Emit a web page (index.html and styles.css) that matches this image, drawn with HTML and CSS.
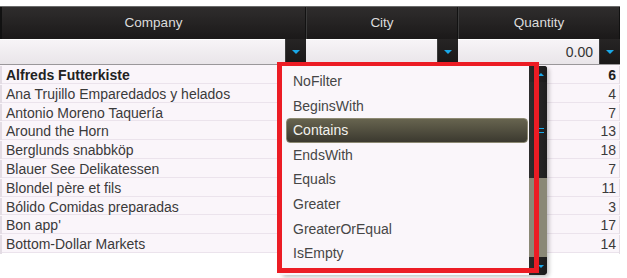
FILE: index.html
```html
<!DOCTYPE html>
<html>
<head>
<meta charset="utf-8">
<link rel="stylesheet" href="styles.css">
</head>
<body>
<div class="page">
  <div class="grid">
    <div class="hrow">
      <div class="hcell">Company</div>
      <div class="hcell">City</div>
      <div class="hcell">Quantity</div>
    </div>
    <div class="frow">
      <div class="fcell"><div class="finput"></div><div class="fbtn"><span class="tri"></span></div></div>
      <div class="fcell"><div class="finput"></div><div class="fbtn"><span class="tri"></span></div></div>
      <div class="fcell"><div class="finput num">0.00</div><div class="fbtn"><span class="tri"></span></div></div>
    </div>
    <div class="rows">
      <div class="row bold"><div class="c1">Alfreds Futterkiste</div><div class="c2"></div><div class="c3">6</div></div>
      <div class="row"><div class="c1">Ana Trujillo Emparedados y helados</div><div class="c2"></div><div class="c3">4</div></div>
      <div class="row"><div class="c1">Antonio Moreno Taquería</div><div class="c2"></div><div class="c3">7</div></div>
      <div class="row"><div class="c1">Around the Horn</div><div class="c2"></div><div class="c3">13</div></div>
      <div class="row"><div class="c1">Berglunds snabbköp</div><div class="c2"></div><div class="c3">18</div></div>
      <div class="row"><div class="c1">Blauer See Delikatessen</div><div class="c2"></div><div class="c3">7</div></div>
      <div class="row"><div class="c1">Blondel père et fils</div><div class="c2"></div><div class="c3">11</div></div>
      <div class="row"><div class="c1">Bólido Comidas preparadas</div><div class="c2"></div><div class="c3">3</div></div>
      <div class="row"><div class="c1">Bon app'</div><div class="c2"></div><div class="c3">17</div></div>
      <div class="row"><div class="c1">Bottom-Dollar Markets</div><div class="c2"></div><div class="c3">14</div></div>
    </div>
  </div>

  <div class="popup">
    <div class="list">
      <div class="item">NoFilter</div>
      <div class="item">BeginsWith</div>
      <div class="item sel">Contains</div>
      <div class="item">EndsWith</div>
      <div class="item">Equals</div>
      <div class="item">Greater</div>
      <div class="item">GreaterOrEqual</div>
      <div class="item">IsEmpty</div>
    </div>
    <div class="sbar">
      <div class="sbtn up"><span class="atri up"></span></div>
      <div class="strack">
        <div class="sthumb"><span class="grip"></span></div>
        <div class="srest"></div>
      </div>
      <div class="sbtn down"><span class="atri down"></span></div>
    </div>
  </div>
  <div class="mark"></div>
</div>
</body>
</html>
```
FILE: styles.css
```css
html, body {
  margin: 0;
  padding: 0;
  background: #ffffff;
}
.page {
  position: relative;
  width: 627px;
  height: 278px;
  padding-top: 6px;
  box-sizing: border-box;
  font-family: "Liberation Sans", Arial, sans-serif;
  font-size: 14px;
  overflow: hidden;
}
.grid {
  width: 620px;
}
.hrow {
  display: grid;
  grid-template-columns: 306px 152px 162px;
  height: 33px;
  background: linear-gradient(#2f2d2d, #1b1919);
  border-top: 1px solid #6a6a6a;
  box-sizing: border-box;
  font-size: 13.5px;
}
.hcell {
  display: flex;
  align-items: center;
  justify-content: center;
  color: #dcdcdc;
  border-left: 1px solid #3c3c3c;
  border-right: 1px solid #121212;
  padding-bottom: 1px;
}
.hcell:first-child {
  border-left: 2px solid #111;
}
.hcell:last-child {
  border-right: 1px solid #111;
}
.frow {
  display: grid;
  grid-template-columns: 306px 152px 162px;
  height: 26px;
  border-bottom: 1px solid #9a979a;
  box-sizing: border-box;
}
.fcell {
  display: flex;
}
.finput {
  flex: 1;
  background: linear-gradient(#f7f4f7, #e9e5e9);
  border-top: 1px solid #fff;
  display: flex;
  align-items: center;
  justify-content: flex-end;
  padding-right: 6px;
  color: #333;
}
.fbtn {
  width: 21px;
  background: linear-gradient(#262424, #1a1818);
  border-left: 1px solid #3a3a3a;
  box-sizing: border-box;
  display: flex;
  align-items: center;
  justify-content: center;
}
.tri {
  width: 0;
  height: 0;
  border-left: 4px solid transparent;
  border-right: 4px solid transparent;
  border-top: 4px solid #19a8e8;
  margin-top: 1px;
}
.rows {
  display: flex;
  flex-direction: column;
}
.row {
  display: grid;
  grid-template-columns: 306px 152px 162px;
  height: 18.8px;
  background: #faf5fa;
  border-bottom: 1px solid #ebe3ec;
  box-sizing: border-box;
  color: #3a3a3a;
  line-height: 19px;
  padding-top: 1px;
}
.row.bold {
  font-weight: bold;
  color: #222;
}
.c1 {
  padding-left: 4px;
  border-left: 2px solid #e3dce4;
  border-right: 1px solid #ebe3ec;
  white-space: nowrap;
}
.c2 {
  border-right: 1px solid #ebe3ec;
}
.c3 {
  text-align: right;
  padding-right: 3px;
  border-right: 1px solid #e3dce4;
}
.popup {
  position: absolute;
  left: 281px;
  top: 66px;
  width: 266px;
  height: 209px;
  display: flex;
  background: #faf6fa;
  border-radius: 0 3px 4px 0;
  box-shadow: 2px 2px 4px rgba(0, 0, 0, 0.25);
}
.list {
  flex: 1;
  padding: 3px 1px 0 5px;
  display: flex;
  flex-direction: column;
}
.item {
  height: 24.6px;
  line-height: 24px;
  padding-left: 7px;
  color: #464646;
  box-sizing: border-box;
}
.item.sel {
  background: linear-gradient(#67644f, #3b392f);
  border: 1px solid #8c8972;
  border-radius: 4px;
  color: #f2f2ee;
  padding-left: 6px;
  line-height: 22px;
}
.sbar {
  width: 18px;
  display: flex;
  flex-direction: column;
  background: #1e1e1e;
  border-radius: 0 3px 4px 0;
  overflow: hidden;
}
.sbtn {
  height: 16px;
  background: linear-gradient(90deg, #2a2a2a, #1a1a1a);
  display: flex;
  align-items: center;
  justify-content: center;
}
.sbtn.down {
  height: 18px;
}
.atri {
  width: 0;
  height: 0;
  border-left: 3px solid transparent;
  border-right: 3px solid transparent;
  margin-left: 6px;
}
.atri.up {
  border-bottom: 3px solid #19a8e8;
}
.atri.down {
  border-top: 3px solid #19a8e8;
}
.strack {
  flex: 1;
  display: flex;
  flex-direction: column;
  background: #8a8876;
}
.sthumb {
  height: 96px;
  background: linear-gradient(90deg, #2e2e2e, #1e1e1e);
  display: flex;
  align-items: center;
  justify-content: center;
}
.grip {
  width: 5px;
  height: 3px;
  border-top: 1px solid #19a8e8;
  border-bottom: 1px solid #19a8e8;
  margin-left: 6px;
}
.srest {
  flex: 1;
}
.mark {
  position: absolute;
  left: 277px;
  top: 62px;
  width: 262px;
  height: 211px;
  border: 5px solid #ec1c24;
  border-top-width: 4px;
  box-sizing: border-box;
}
```
